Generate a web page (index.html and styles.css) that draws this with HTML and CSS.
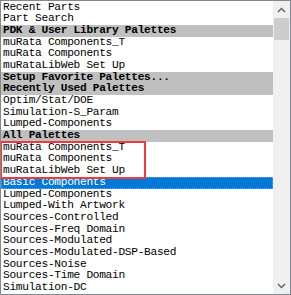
FILE: index.html
```html
<!DOCTYPE html>
<html lang="en">
<head>
  <meta charset="UTF-8">
  <title>Palette List</title>
  <link rel="stylesheet" href="styles.css">
</head>
<body>
  <div class="listbox">
    <div class="items">
      <div class="item">Recent Parts</div>
      <div class="item">Part Search</div>
      <div class="item header">PDK &amp; User Library Palettes</div>
      <div class="item">muRata Components_T</div>
      <div class="item">muRata Components</div>
      <div class="item">muRataLibWeb Set Up</div>
      <div class="item header">Setup Favorite Palettes...</div>
      <div class="item header">Recently Used Palettes</div>
      <div class="item">Optim/Stat/DOE</div>
      <div class="item">Simulation-S_Param</div>
      <div class="item">Lumped-Components</div>
      <div class="item header">All Palettes</div>

      <!-- marked group -->
      <div class="marked">
        <div class="item">muRata Components_T</div>
        <div class="item">muRata Components</div>
        <div class="item">muRataLibWeb Set Up</div>
      </div>

      <div class="item selected">Basic Components</div>
      <div class="item">Lumped-Components</div>
      <div class="item">Lumped-With Artwork</div>
      <div class="item">Sources-Controlled</div>
      <div class="item">Sources-Freq Domain</div>
      <div class="item">Sources-Modulated</div>
      <div class="item">Sources-Modulated-DSP-Based</div>
      <div class="item">Sources-Noise</div>
      <div class="item">Sources-Time Domain</div>
      <div class="item">Simulation-DC</div>
    </div>

    <div class="scrollbar">
      <div class="arrow">
        <svg width="9" height="6" viewBox="0 0 9 6"><path d="M1 5 L4.5 1.5 L8 5" fill="none" stroke="#606060" stroke-width="1.4"/></svg>
      </div>
      <div class="thumb"></div>
      <div class="track"></div>
      <div class="arrow">
        <svg width="9" height="6" viewBox="0 0 9 6"><path d="M1 1 L4.5 4.5 L8 1" fill="none" stroke="#606060" stroke-width="1.4"/></svg>
      </div>
    </div>
  </div>
</body>
</html>
```

FILE: styles.css
```css
* { box-sizing: border-box; }

body {
  margin: 0;
  padding: 0;
  background: #ffffff;
}

.listbox {
  width: 291px;
  height: 295px;
  border: 1px solid #828790;
  display: flex;
  overflow: hidden;
  background: #ffffff;
}

.items {
  flex: 1;
  padding-top: 0.5px;
  overflow: hidden;
}

.item {
  height: 11.7px;
  line-height: 11.7px;
  padding-left: 2px;
  font-family: "Liberation Mono", "DejaVu Sans Mono", monospace;
  font-size: 11.2px;
  letter-spacing: -0.3px;
  color: #000000;
  white-space: nowrap;
}

.header {
  background: #c0c0c0;
  font-weight: bold;
}

.selected {
  background: #0078d7;
  color: #ffffff;
  outline: 1px dotted #6aa6de;
  outline-offset: -1px;
}

.marked {
  position: relative;
}

.marked::after {
  content: "";
  position: absolute;
  left: -1px;
  top: -1px;
  width: 142px;
  bottom: -2px;
  border: 2px solid #ee3a3a;
}

.scrollbar {
  width: 17px;
  background: #f0f0f0;
  display: flex;
  flex-direction: column;
}

.arrow {
  height: 17px;
  display: flex;
  align-items: center;
  justify-content: center;
}

.thumb {
  height: 22px;
  margin: 0 1px;
  background: #cdcdcd;
}

.track {
  flex: 1;
}
```
